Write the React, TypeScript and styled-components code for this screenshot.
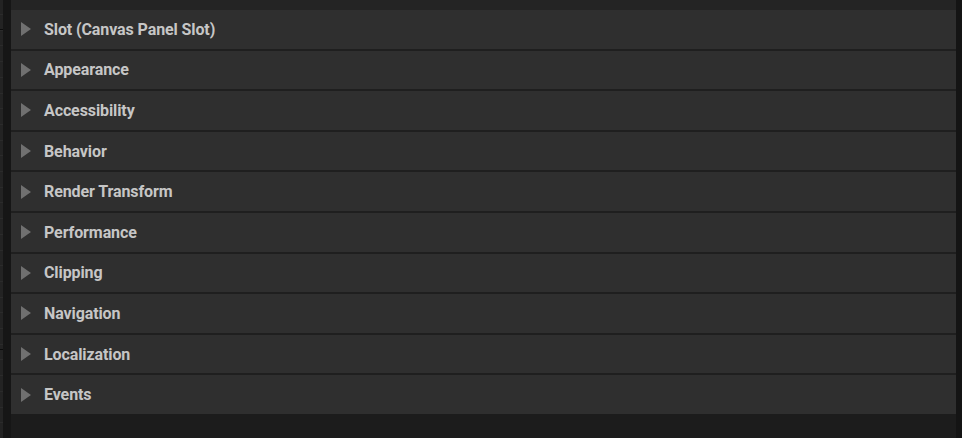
import React from "react";
import styled, { createGlobalStyle } from "styled-components";

const ROW_HEIGHT = 38.6;

const sections = [
  "Slot (Canvas Panel Slot)",
  "Appearance",
  "Accessibility",
  "Behavior",
  "Render Transform",
  "Performance",
  "Clipping",
  "Navigation",
  "Localization",
  "Events",
];

const GlobalStyle = createGlobalStyle`
  html, body {
    margin: 0;
    padding: 0;
    background: #1b1b1b;
  }
  body {
    font-family: Roboto, "Liberation Sans", sans-serif;
  }
`;

const Page = styled.div`
  display: flex;
  flex-direction: row;
  width: 962px;
  height: 438px;
  overflow: hidden;
`;

const Gutter = styled.div`
  width: 3px;
  flex-shrink: 0;
  background-color: #232323;
  background-image: repeating-linear-gradient(
    to bottom,
    transparent 0px,
    transparent 14px,
    #2b2b2b 14px,
    #2b2b2b 15px,
    transparent 15px,
    transparent 15.7px
  );
  position: relative;
`;

const GutterMark = styled.div`
  position: absolute;
  left: 0;
  width: 3px;
  height: 1px;
  top: ${(props: any) => props.top}px;
  background: #0c0c0c;
` as any;

const Spacer = styled.div`
  width: 8px;
  flex-shrink: 0;
  background: #161616;
`;

const Panel = styled.div`
  flex: 1;
  display: flex;
  flex-direction: column;
  background: #1c1c1c;
`;

const HeaderBand = styled.div`
  height: 10px;
  background: #242424;
`;

const List = styled.div`
  display: flex;
  flex-direction: column;
`;

const Row = styled.div`
  display: flex;
  flex-direction: row;
  align-items: center;
  height: ${ROW_HEIGHT}px;
  padding-left: 10px;
  background: #2f2f2f;
  border-top: ${(props: any) => (props.first ? "none" : "2px solid #1f1f1f")};
` as any;

const Arrow = styled.div`
  width: 0;
  height: 0;
  border-style: solid;
  border-width: 7px 0 7px 10px;
  border-color: transparent transparent transparent #707070;
  margin-right: 13px;
`;

const Label = styled.span`
  font-family: Roboto, "Liberation Sans", sans-serif;
  font-weight: 700;
  font-size: 16px;
  letter-spacing: -0.1px;
  color: #c6c6c6;
  white-space: nowrap;
`;

const RightEdge = styled.div`
  width: 6px;
  flex-shrink: 0;
  background: #141414;
`;

export default function App() {
  return (
    <>
      <GlobalStyle />
      <Page>
        <Gutter>
          <GutterMark top={29} />
          <GutterMark top={349} />
        </Gutter>
        <Spacer />
        <Panel>
          <HeaderBand />
          <List>
            {sections.map((name, i) => (
              <Row key={name} first={i === 0}>
                <Arrow />
                <Label>{name}</Label>
              </Row>
            ))}
          </List>
        </Panel>
        <RightEdge />
      </Page>
    </>
  );
}
